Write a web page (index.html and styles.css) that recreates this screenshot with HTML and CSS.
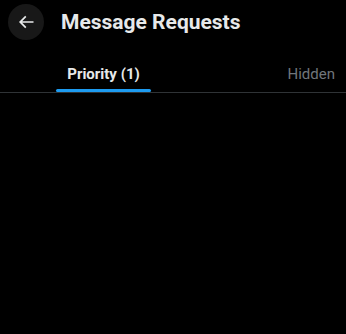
FILE: index.html
```html
<!DOCTYPE html>
<html>
<head>
<meta charset="utf-8">
<link rel="stylesheet" href="styles.css">
</head>
<body>
<div class="page">
  <header class="header">
    <button class="back" aria-label="Back">
      <svg viewBox="0 0 24 24" width="20" height="20"><path d="M7.414 13l5.043 5.04-1.414 1.42L3.586 12l7.457-7.46 1.414 1.42L7.414 11H21v2H7.414z" fill="#e7e9ea"/></svg>
    </button>
    <h1 class="title">Message Requests</h1>
  </header>
  <nav class="tabs">
    <div class="tab tab-active"><span class="tab-label">Priority (1)</span><span class="indicator"></span></div>
    <div class="tab tab-hidden"><span class="tab-label">Hidden</span></div>
  </nav>
</div>
</body>
</html>
```
FILE: styles.css
```css
html, body {
  margin: 0;
  background: #000;
}
body {
  font-family: "Segoe UI", Roboto, "Noto Sans", sans-serif;
  color: #e7e9ea;
}
.page {
  width: 346px;
  height: 334px;
  overflow: hidden;
}
.header {
  display: flex;
  align-items: center;
  height: 44px;
  padding: 0 8px;
}
.back {
  width: 36px;
  height: 36px;
  border-radius: 50%;
  border: none;
  background: #181818;
  display: flex;
  align-items: center;
  justify-content: center;
  padding: 0;
  margin-top: 0;
}
.title {
  margin: 0 0 0 17px;
  font-size: 21px;
  font-weight: 700;
  letter-spacing: 0;
  line-height: 24px;
}
.tabs {
  display: flex;
  justify-content: space-between;
  height: 48px;
  border-bottom: 1px solid #2f3336;
  padding-left: 56px;
  padding-right: 10px;
}
.tab {
  display: flex;
  align-items: center;
  justify-content: center;
  position: relative;
  font-size: 15px;
}
.tab-active {
  width: 95px;
  font-weight: 700;
  color: #e7e9ea;
}
.tab-hidden {
  color: #71767b;
  font-weight: 400;
  padding-right: 1px;
}
.tab-label {
  padding-top: 12px;
}
.indicator {
  position: absolute;
  left: 0;
  right: 0;
  bottom: 0;
  height: 3px;
  border-radius: 2px;
  background: #1d9bf0;
}
```
